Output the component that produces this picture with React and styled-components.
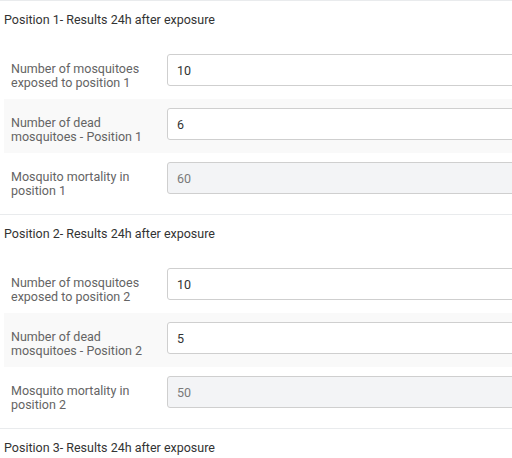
import React from "react";
import styled, { createGlobalStyle } from "styled-components";

const GlobalStyle = createGlobalStyle`
  html, body {
    margin: 0;
    padding: 0;
    background: #fff;
    overflow: hidden;
  }
  body {
    font-family: Roboto, "Liberation Sans", Arial, sans-serif;
  }
`;

const Page = styled.div`
  width: 560px;
`;

const Section = styled.section`
  border-top: 1px solid #e9ebed;
  padding-bottom: 7px;
`;

const SectionTitle = styled.div`
  height: 44px;
  box-sizing: border-box;
  padding: 12px 0 0 4px;
  font-size: 12.5px;
  line-height: 14px;
  color: #333;
`;

const Row = styled.div`
  display: grid;
  grid-template-columns: 163px 1fr;
  grid-template-rows: 32px;
  margin-left: 4px;
  padding: 9px 0 13px;
  background: ${(p) => (p.$shaded ? "#f9f9f9" : "#fff")};
`;

const Label = styled.label`
  padding: 8px 0 0 7px;
  font-size: 12.5px;
  line-height: 14px;
  color: #646464;
  max-width: 140px;
`;

const Input = styled.input`
  box-sizing: border-box;
  height: 32px;
  width: 100%;
  margin: 0;
  padding: 0 9px;
  border: 1px solid #cfcfcf;
  border-radius: 3px;
  font-family: Roboto, "Liberation Sans", Arial, sans-serif;
  font-size: 12.5px;
  color: ${(p) => (p.disabled ? "#7a7a7a" : "#333")};
  background: ${(p) => (p.disabled ? "#f3f4f6" : "#fff")};
  outline: none;
`;

const positions = [
  { n: 1, exposed: "10", dead: "6", mortality: "60" },
  { n: 2, exposed: "10", dead: "5", mortality: "50" },
  { n: 3, exposed: "", dead: "", mortality: "" },
];

const Field = ({ label, value, shaded, disabled }) => (
  <Row $shaded={shaded}>
    <Label>{label}</Label>
    <Input value={value} disabled={disabled} readOnly />
  </Row>
);

export default function App() {
  return (
    <Page>
      <GlobalStyle />
      {positions.map((p) => (
        <Section key={p.n}>
          <SectionTitle>Position {p.n}- Results 24h after exposure</SectionTitle>
          <Field label={`Number of mosquitoes exposed to position ${p.n}`} value={p.exposed} />
          <Field label={`Number of dead mosquitoes - Position ${p.n}`} value={p.dead} shaded />
          <Field label={`Mosquito mortality in position ${p.n}`} value={p.mortality} disabled />
        </Section>
      ))}
    </Page>
  );
}
